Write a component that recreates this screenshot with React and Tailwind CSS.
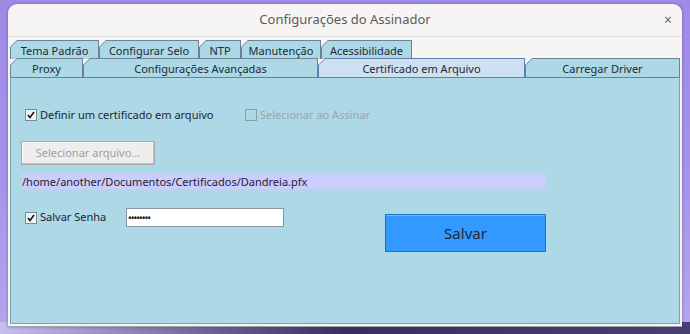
import React from 'react';

const font = { fontFamily: '"Noto Sans", "Open Sans", sans-serif' };

function Tab({ label, width, active }) {
  return (
    <div
      className={`h-[19px] shrink-0 pl-px pt-px pr-px ${active ? 'bg-[#5f7fb0]' : 'bg-[#6d8197]'} [clip-path:polygon(7px_0,100%_0,100%_100%,0_100%,0_7px)]`}
      style={{ width }}
    >
      <div
        className={`h-full flex items-center justify-center text-[11px] leading-none text-[#222a33] ${active ? 'bg-[#cfe0f1]' : 'bg-[#add8e6]'} [clip-path:polygon(6px_0,100%_0,100%_100%,0_100%,0_6px)]`}
      >
        {label}
      </div>
    </div>
  );
}

function Check({ checked, disabled }) {
  return (
    <div
      className={`w-[12px] h-[12px] border flex items-center justify-center ${disabled ? 'border-[#8a9aa6] bg-transparent' : 'border-[#7a8a96] bg-[#eef3f6]'}`}
    >
      {checked && (
        <svg width="8" height="8" viewBox="0 0 8 8">
          <path d="M1 4 L3 6.5 L7 1" stroke="#111" strokeWidth="1.6" fill="none" />
        </svg>
      )}
    </div>
  );
}

export default function App() {
  return (
    <div className="w-[690px] h-[334px] overflow-hidden relative bg-gradient-to-b from-[#9f8ae6] via-[#a692ea] to-[#b5a6ec]" style={font}>
      <div className="absolute left-0 right-0 bottom-0 h-[12px] bg-gradient-to-r from-[#c8bff0] via-[#3a2f5a] to-[#4a3f72]" />
      <div className="ml-[8px] mt-[4px] w-[674px] rounded-t-[9px] bg-[#f6f5f4] relative shadow-[0_0_3px_rgba(60,40,120,0.5)]">
        <div className="h-[33px] flex items-center justify-center relative border-b border-[#e2e0de]">
          <span className="text-[13px] text-[#5a5a5a]">Configurações do Assinador</span>
          <span className="absolute right-[10px] top-[9px] text-[14px] leading-none text-[#6a6a6a]">×</span>
        </div>
        <div className="pt-[3px] pl-[2px] pr-[2px] pb-[2px] border-b border-[#9aa7b2]">
          <div className="flex">
            <Tab label="Tema Padrão" width={89} />
            <Tab label="Configurar Selo" width={100} />
            <Tab label="NTP" width={42} />
            <Tab label="Manutenção" width={80} />
            <Tab label="Acessibilidade" width={91} />
          </div>
          <div className="flex -mt-px relative z-10">
            <Tab label="Proxy" width={73} />
            <Tab label="Configurações Avançadas" width={235} />
            <Tab label="Certificado em Arquivo" width={207} active />
            <Tab label="Carregar Driver" width={155} />
          </div>
          <div className="h-[247px] bg-[#add8e6] border border-[#7f9fb8] border-t-[#5f7fb0] pl-[10px] pt-[29px] text-[11px] text-[#1c2430]">
            <div className="flex items-center h-[16px]">
              <div className="ml-[4px] w-[15px]"><Check checked /></div>
              <span className="w-[205px]">Definir um certificado em arquivo</span>
              <div className="w-[15px]"><Check disabled /></div>
              <span className="text-[#9aa4ab]">Selecionar ao Assinar</span>
            </div>
            <div className="mt-[18px] w-[134px] h-[24px] border border-[#a8a8a8] bg-[#eeeeee] shadow-[inset_-1px_-1px_0_#c4c4c4,inset_1px_1px_0_#ffffff] flex items-center justify-center text-[#a0a0a0]">
              Selecionar arquivo...
            </div>
            <div className="mt-[8px] w-[524px] h-[16px] bg-[#ccccff] flex items-center pl-px text-[#1c2430] leading-none">
              /home/another/Documentos/Certificados/Dandreia.pfx
            </div>
            <div className="flex items-start mt-[19px]">
              <div className="flex items-center h-[19px] w-[105px]">
                <div className="ml-[4px] w-[15px]"><Check checked /></div>
                <span>Salvar Senha</span>
              </div>
              <div className="w-[158px] h-[19px] bg-white border border-[#8a96a0] flex items-center pl-[1px] text-[10px] leading-none tracking-[-1px] text-[#111]">
                ••••••••
              </div>
              <div className="ml-[101px] mt-[6px] w-[161px] h-[38px] bg-[#3399ff] border border-[#1f6fc8] shadow-[inset_0_1px_0_#6fb6ff] flex items-center justify-center text-[15px] text-[#1e2a3a]">
                Salvar
              </div>
            </div>
          </div>
        </div>
      </div>
    </div>
  );
}
